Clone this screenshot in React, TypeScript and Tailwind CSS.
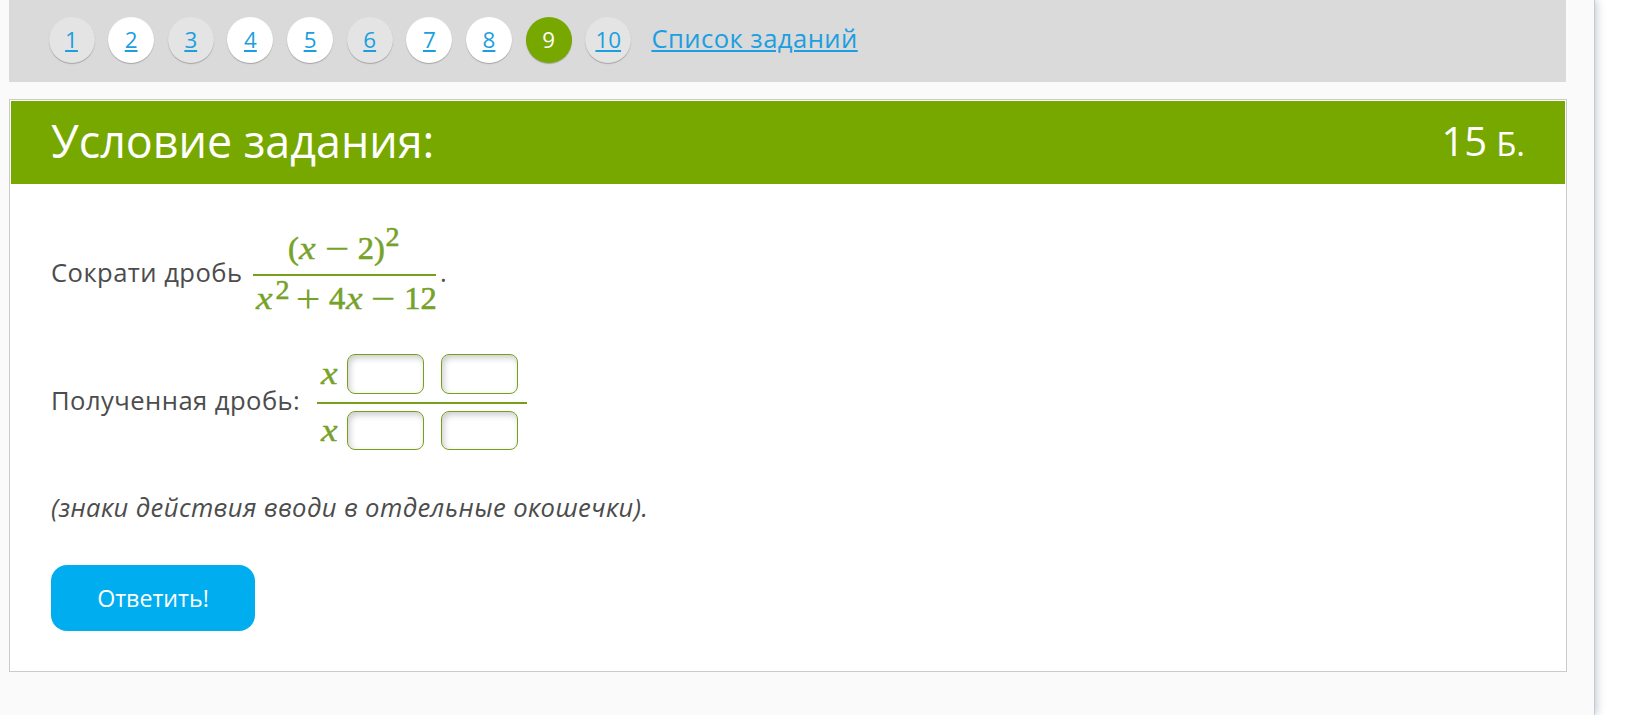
import React, { useState } from 'react';
import clsx from 'clsx';

type TaskState = 'open' | 'done' | 'current';

const tasks: { id: number; state: TaskState }[] = [
  { id: 1, state: 'done' },
  { id: 2, state: 'open' },
  { id: 3, state: 'done' },
  { id: 4, state: 'open' },
  { id: 5, state: 'open' },
  { id: 6, state: 'done' },
  { id: 7, state: 'open' },
  { id: 8, state: 'open' },
  { id: 9, state: 'current' },
  { id: 10, state: 'done' },
];

const TaskLink: React.FC<{ id: number; state: TaskState }> = ({ id, state }) => (
  <a
    href="#"
    className={clsx(
      'flex h-[46px] w-[46px] shrink-0 items-center justify-center rounded-full text-[22.4px] leading-[46px] shadow-[0_1px_1px_rgba(0,0,0,0.25)]',
      state === 'open' && 'bg-white',
      state === 'done' && 'bg-[#e4e4e4]',
      state === 'current' ? 'bg-[#76a800] text-white' : 'text-[#1b9fe0] underline decoration-2 underline-offset-2'
    )}
  >
    {id}
  </a>
);

// Variable in a formula: italic serif, stretched to the width of a math italic
const Var: React.FC = () => (
  <span className="inline-block w-[17px] text-center italic [-webkit-text-stroke:0.4px]">
    <span className="inline-block scale-x-115">x</span>
  </span>
);

const Sup: React.FC<{ children: React.ReactNode; className?: string }> = ({ children, className }) => (
  <span className={clsx('inline-block w-[15px] text-center text-[28px] leading-0', className)}>{children}</span>
);

const Op: React.FC<{ children: React.ReactNode }> = ({ children }) => (
  <span className="inline-block w-[42px] text-center leading-0">
    <span className="inline-block scale-x-135 scale-y-125 [-webkit-text-stroke:0px]">{children}</span>
  </span>
);

const Fraction: React.FC<{ top: React.ReactNode; bottom: React.ReactNode; className?: string }> = ({
  top,
  bottom,
  className,
}) => (
  <div
    className={clsx(
      "flex flex-col font-['Liberation_Serif',serif] text-[32.5px] whitespace-nowrap text-[#76a22a] [-webkit-text-stroke:0.6px_#76a22a]",
      className
    )}
  >
    {top}
    <div className="h-[2px] bg-[#76a01c]" />
    {bottom}
  </div>
);

const AnswerRow: React.FC<{ row: string }> = ({ row }) => {
  const [values, setValues] = useState(['', '']);

  return (
    <>
      <span className="mr-[9px] flex leading-[38px]">
        <Var />
      </span>
      {values.map((value, i) => (
        <input
          key={i}
          aria-label={`${row} ${i + 1}`}
          value={value}
          onChange={(e) => setValues(values.map((v, j) => (j === i ? e.target.value : v)))}
          className="mr-[17px] h-full w-[77px] rounded-lg border border-[#76a01c] bg-white px-2 text-xl shadow-[inset_2px_3px_6px_rgba(0,0,0,0.2)] outline-none"
        />
      ))}
    </>
  );
};

const App: React.FC = () => {
  return (
    <div className="flex h-[715px] w-[1625px] overflow-hidden bg-white font-['Open_Sans',sans-serif] text-[#4c4c4c]">
      <div className="h-full w-[1595px] shrink-0 border-r border-[#c8cacd] bg-[#fafafa] pl-[9px] shadow-[2px_0_8px_rgba(90,110,140,0.35)]">
        {/* Task navigation */}
        <nav className="flex h-[82px] w-[1557px] gap-[13.65px] bg-[#dadada] pt-[17px] pl-[39.5px]">
          {tasks.map((task) => (
            <TaskLink key={task.id} {...task} />
          ))}
          <a
            href="#"
            className="ml-[6.5px] text-[25.6px] leading-[44px] tracking-[0.45px] whitespace-nowrap text-[#1b9fe0] underline decoration-2 underline-offset-2"
          >
            Список заданий
          </a>
        </nav>

        {/* Task card */}
        <main className="mt-[17px] h-[573px] w-[1558px] border border-[#cbcbcb] bg-white p-px">
          <header className="flex h-[83px] items-start justify-between bg-[#76a800] pr-[40px] pl-[40px] text-white">
            <h1 className="text-[44.8px] leading-[80px]">Условие задания:</h1>
            <span className="text-[40px] leading-[80px]">
              15<span className="ml-[9px] text-[33px]">Б.</span>
            </span>
          </header>

          <section className="pl-[40px] text-[25.6px] leading-[40px] tracking-[0.4px]">
            <div className="flex h-[96px] mt-[40px]">
              <span className="mt-[29px] w-[202px] tracking-[0.45px]">Сократи дробь</span>
              <Fraction
                className="w-[183px] tracking-normal"
                top={
                  <div className="mb-[2px] h-[48px] pl-[35px] leading-[48px]">
                    (<Var />
                    <Op>−</Op>2)
                    <Sup className="align-[13px]">2</Sup>
                  </div>
                }
                bottom={
                  <div className="h-[44px] pl-[3px] leading-[45px]">
                    <Var />
                    <Sup className="ml-[2px] -mr-[3px] align-[10px]">2</Sup>
                    <Op>+</Op>4<Var />
                    <Op>−</Op>12
                  </div>
                }
              />
              <span className="mt-[29px] ml-[4px]">.</span>
            </div>

            <div className="mt-[34px] flex h-[96px]">
              <span className="mt-[27px] w-[266px] tracking-[0.45px]">Полученная дробь:</span>
              <Fraction
                className="w-[210px] tracking-normal"
                top={
                  <div className="mb-[8px] flex h-[40px] pl-[4px]">
                    <AnswerRow row="Числитель" />
                  </div>
                }
                bottom={
                  <div className="mt-[7px] flex h-[39px] pl-[4px]">
                    <AnswerRow row="Знаменатель" />
                  </div>
                }
              />
            </div>

            <p className="mt-[38px] italic">(знаки действия вводи в отдельные окошечки).</p>

            <button className="mt-[37px] block h-[66px] w-[204px] rounded-2xl bg-[#00adef] text-[23.2px] leading-[66px] tracking-normal text-white">
              Ответить!
            </button>
          </section>
        </main>
      </div>
    </div>
  );
};

export default App;
